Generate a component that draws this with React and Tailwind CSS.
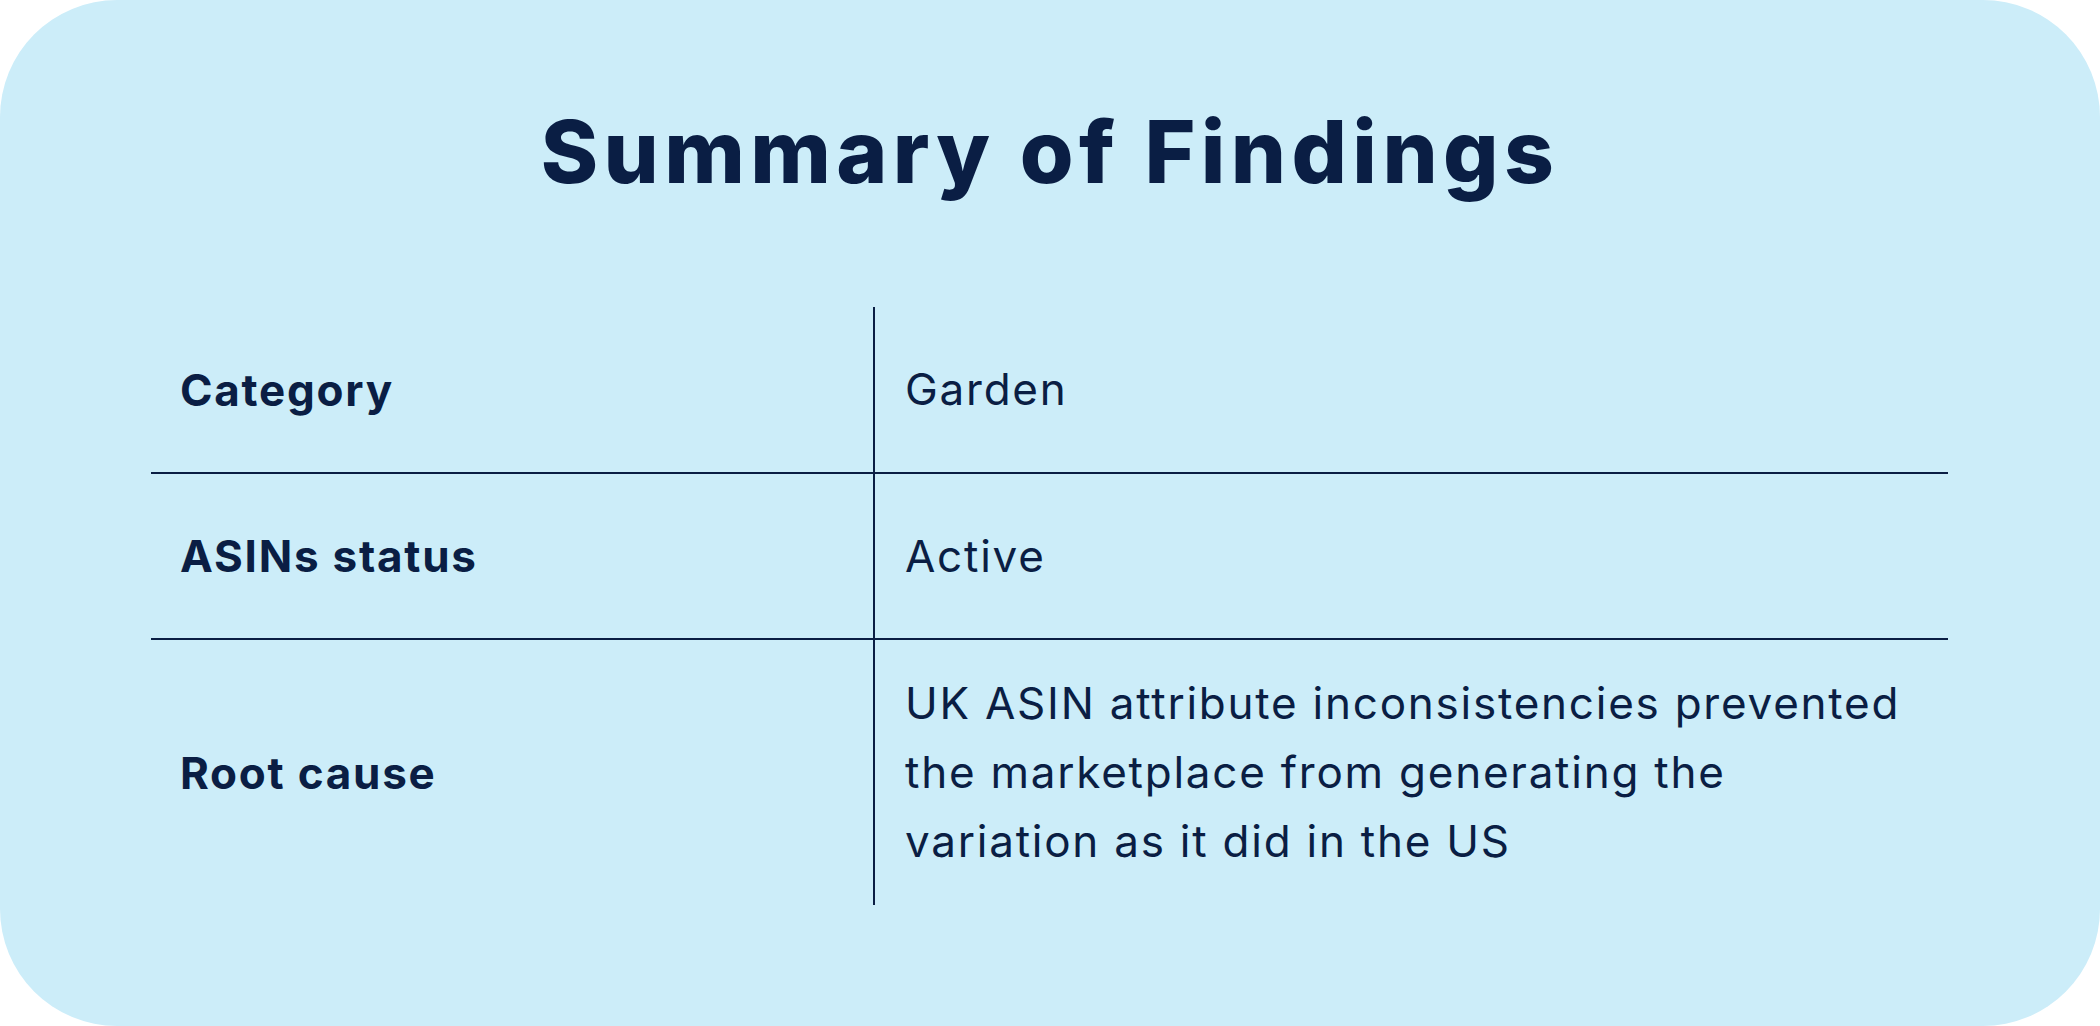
const rows = [
  { label: "Category", value: "Garden", height: "h-[167px]" },
  { label: "ASINs status", value: "Active", height: "h-[166px]" },
  {
    label: "Root cause",
    value: "UK ASIN attribute inconsistencies prevented the marketplace from generating the variation as it did in the US",
    height: "h-[265px]",
  },
];

const App = () => {
  return (
    <div className="w-full h-[1026px] bg-white" style={{ fontFamily: "Inter, 'DejaVu Sans', sans-serif" }}>
      <div className="h-full rounded-[117px] bg-[#CCEDF9] text-[#0A1E44]">
        <h1 className="pt-[108px] text-center text-[87px] leading-none font-extrabold tracking-[0.062em]">
          Summary of Findings
        </h1>

        <div className="mt-[112px] ml-[151px] w-[1797px]">
          {rows.map((row, i) => (
            <div
              key={row.label}
              className={`flex ${row.height} ${i < rows.length - 1 ? "border-b-2 border-[#0A1E44]" : ""}`}
            >
              <div className="w-[724px] shrink-0 border-r-2 border-[#0A1E44] flex items-center pl-[29px] text-[44px] font-bold tracking-[0.04em]">
                {row.label}
              </div>
              <div className="flex-1 flex items-center pl-[30px] pr-[40px] text-[44px] leading-[69px] font-normal tracking-[0.04em]">
                <p className="max-w-[1030px]">{row.value}</p>
              </div>
            </div>
          ))}
        </div>
      </div>
    </div>
  );
};

export default App;
